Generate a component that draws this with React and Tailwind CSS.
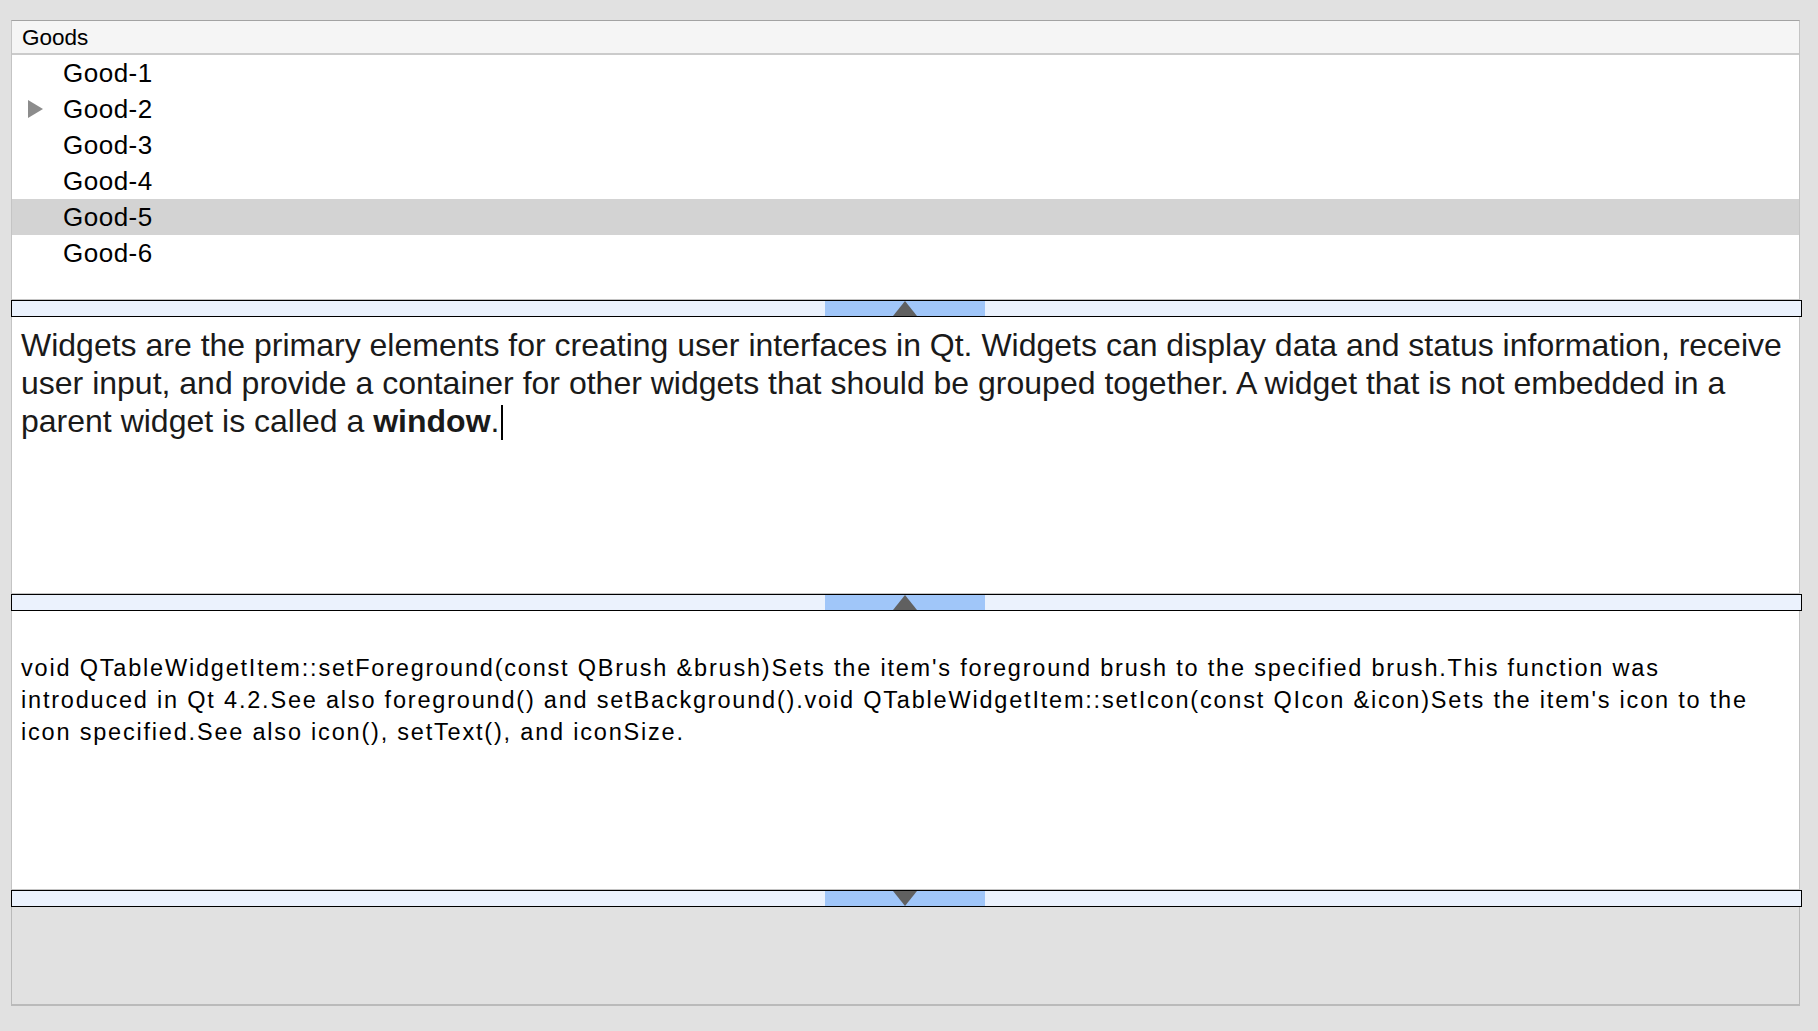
import React from "react";

const Handle = ({ down }) => (
  <div className="w-[1791px] h-[17px] shrink-0 border border-black bg-[#ebf2fd] flex justify-center pr-[3px]">
    <div className="w-[160px] h-full bg-[#a0c6f9] flex items-center justify-center">
      <svg width="24" height="15" viewBox="0 0 24 15">
        {down ? (
          <polygon points="0,0 24,0 12,15" fill="#606060" />
        ) : (
          <polygon points="12,0 24,15 0,15" fill="#606060" />
        )}
      </svg>
    </div>
  </div>
);

export default function App() {
  const rows = ["Good-1", "Good-2", "Good-3", "Good-4", "Good-5", "Good-6"];
  return (
    <div className="w-[1818px] h-[1031px] bg-[#e1e1e1] pt-[20px] pl-[11px] overflow-hidden">
      <div className="w-[1791px] flex flex-col">
        {/* Tree */}
        <div className="w-[1789px] h-[280px] shrink-0 bg-white border border-[#c4c4c4] border-t-[#a3a3a3] flex flex-col">
          <div className="h-[34px] shrink-0 bg-[#f5f5f5] border-b-2 border-[#cbcbcb] pl-[10px] text-[22.5px] leading-[33px] text-black font-['Liberation_Sans',Arial,sans-serif]">
            Goods
          </div>
          {rows.map((r, i) => (
            <div
              key={r}
              className={`h-[36px] shrink-0 flex items-center relative ${
                i === 4 ? "bg-[#d3d3d3]" : ""
              }`}
            >
              {i === 1 && (
                <svg
                  className="absolute left-[16px] top-[9px]"
                  width="15"
                  height="18"
                  viewBox="0 0 15 18"
                >
                  <polygon points="0,0 15,9 0,18" fill="#8c8c8c" />
                </svg>
              )}
              <span className="pl-[51px] text-[26px] leading-[36px] tracking-[0.5px] text-black font-['Liberation_Sans',Arial,sans-serif]">
                {r}
              </span>
            </div>
          ))}
        </div>

        <Handle />

        {/* Rich text edit */}
        <div className="w-[1789px] h-[277px] shrink-0 bg-white border-x border-b border-[#c4c4c4] pl-[9px] pt-[9px]">
          <div className="text-[32px] leading-[38px] text-[#1a1a1a] font-['Liberation_Sans',Arial,sans-serif] whitespace-nowrap">
            <div>
              Widgets are the primary elements for creating user interfaces in Qt. Widgets can display data and status information, receive
            </div>
            <div>
              user input, and provide a container for other widgets that should be grouped together. A widget that is not embedded in a
            </div>
            <div>
              parent widget is called a <span className="font-bold">window</span>.
              <span className="inline-block w-[2px] h-[35px] bg-black align-[-8px] ml-[2px]"></span>
            </div>
          </div>
        </div>

        <Handle />

        {/* Plain text edit */}
        <div className="w-[1789px] h-[279px] shrink-0 bg-white border-x border-b border-[#c4c4c4] pl-[9px] pt-[41px]">
          <div className="text-[23.5px] leading-[32px] tracking-[1.8px] text-black font-['Liberation_Sans',Arial,sans-serif] whitespace-nowrap">
            <div>
              void QTableWidgetItem::setForeground(const QBrush &brush)Sets the item's foreground brush to the specified brush.This function was
            </div>
            <div>
              introduced in Qt 4.2.See also foreground() and setBackground().void QTableWidgetItem::setIcon(const QIcon &icon)Sets the item's icon to the
            </div>
            <div>icon specified.See also icon(), setText(), and iconSize.</div>
          </div>
        </div>

        <Handle down />

        {/* Empty area */}
        <div className="w-[1789px] h-[99px] shrink-0 bg-[#e1e1e1] border-x border-[#b9b9b9] border-b-2 border-b-[#bababa]"></div>
      </div>
    </div>
  );
}
